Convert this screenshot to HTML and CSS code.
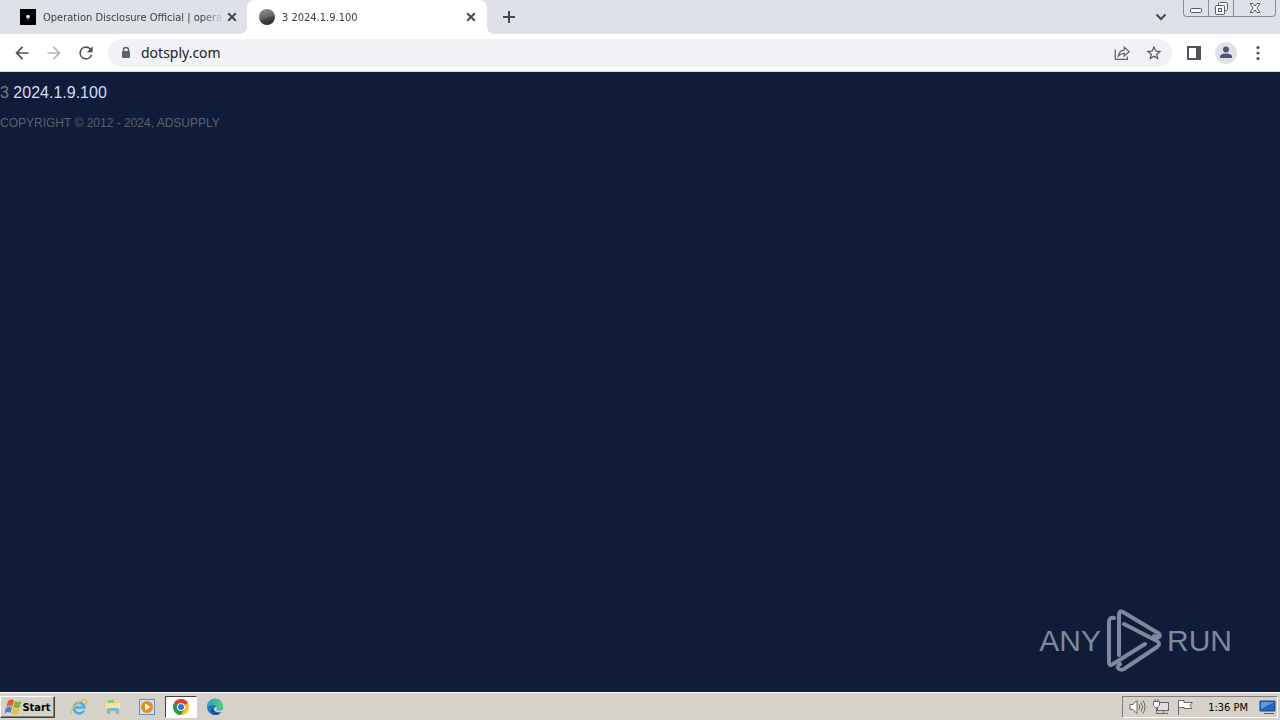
FILE: index.html
```html
<!DOCTYPE html>
<html lang="en">
<head>
    <meta charset="UTF-8">
    <meta name="viewport" content="width=device-width, initial-scale=1.0">
    <title>3 2024.1.9.100</title>
    <link rel="stylesheet" href="styles.css">
</head>
<body>
    <header class="tab-strip">
        <div class="tab">
            <svg class="favicon" viewBox="0 0 16 16">
                <rect width="16" height="16" fill="#000"/>
                <path d="M6 6h4v2q0 2-2 3q-2-1-2-3z" fill="#666"/>
                <circle cx="8" cy="7.500" r="1.500" fill="#eee"/>
            </svg>
            <span class="tab-title">Operation Disclosure Official | opera</span>
            <button class="tab-close" aria-label="Close tab">
                <svg viewBox="0 0 16 16"><path d="M4.200 4.200l7.600 7.600M11.800 4.200l-7.600 7.600"/></svg>
            </button>
        </div>
        <div class="tab active">
            <svg class="favicon" viewBox="0 0 16 16">
                <defs>
                    <linearGradient id="ball" x1="0.300" y1="0" x2="0.600" y2="1">
                        <stop offset="0" stop-color="#8a8a8a"/>
                        <stop offset="0.450" stop-color="#6c6c6c"/>
                        <stop offset="0.650" stop-color="#444"/>
                        <stop offset="1" stop-color="#2a2a2a"/>
                    </linearGradient>
                </defs>
                <circle cx="8" cy="8" r="8" fill="url(#ball)"/>
            </svg>
            <span class="tab-title">3 2024.1.9.100</span>
            <button class="tab-close" aria-label="Close tab">
                <svg viewBox="0 0 16 16"><path d="M4.200 4.200l7.600 7.600M11.800 4.200l-7.600 7.600"/></svg>
            </button>
        </div>
        <button class="new-tab" aria-label="New tab">
            <svg viewBox="0 0 16 16"><path d="M8 2v12M2 8h12"/></svg>
        </button>
        <button class="tab-search" aria-label="Search tabs">
            <svg viewBox="0 0 16 16"><path d="M3.500 5.500L8 10l4.500-4.500"/></svg>
        </button>
        <div class="window-buttons">
            <button class="minimize" aria-label="Minimize">
                <svg viewBox="0 0 16 16"><rect x="2.500" y="8.500" width="11" height="4" rx="1"/></svg>
            </button>
            <button class="restore" aria-label="Restore">
                <svg viewBox="0 0 16 16"><rect x="5.500" y="2.500" width="9" height="8" rx="1"/><rect x="2.500" y="5.500" width="9" height="9" rx="1"/><rect x="5.500" y="8.500" width="3" height="3"/></svg>
            </button>
            <button class="close" aria-label="Close">
                <svg viewBox="0 0 16 16"><path d="M3 3.500h3l2 2.500 2-2.500h3L10 8l3 4.500h-3l-2-2.500-2 2.500H3L6 8z"/></svg>
            </button>
        </div>
    </header>

    <nav class="toolbar">
        <button class="tool" aria-label="Back">
            <svg viewBox="0 0 24 24"><path d="M20 11H7.830l5.590-5.590L12 4l-8 8 8 8 1.410-1.410L7.830 13H20z"/></svg>
        </button>
        <button class="tool disabled" aria-label="Forward">
            <svg viewBox="0 0 24 24"><path d="M12 4l-1.410 1.410L16.170 11H4v2h12.170l-5.580 5.590L12 20l8-8z"/></svg>
        </button>
        <button class="tool" aria-label="Reload">
            <svg viewBox="0 0 24 24"><path d="M17.650 6.350A7.950 7.950 0 0 0 12 4a8 8 0 1 0 7.730 10h-2.080A6 6 0 1 1 12 6c1.660 0 3.140.690 4.220 1.780L13 11h7V4z"/></svg>
        </button>
        <div class="address-bar">
            <svg class="lock" viewBox="0 0 12 14"><path d="M3.500 6V4a2.500 2.500 0 0 1 5 0v2" fill="none" stroke="#5f6368" stroke-width="1.500"/><rect x="2" y="5" width="8" height="7" rx="1" fill="#5f6368"/></svg>
            <input type="text" class="address" value="dotsply.com" aria-label="Address">
            <button class="tool" aria-label="Share">
                <svg class="line" viewBox="0 0 20 20"><path d="M2.500 6v11H16v-3"/><path d="M12.500 3.500l5.500 5-5.500 5v-3q-4 0-6.500 3Q6.500 7.500 12.500 6.500z"/></svg>
            </button>
            <button class="tool" aria-label="Bookmark this tab">
                <svg viewBox="0 0 24 24"><path d="M22 9.240l-7.190-.620L12 2 9.190 8.630 2 9.240l5.460 4.730L5.820 21 12 17.270 18.180 21l-1.630-7.030zM12 15.400l-3.760 2.270 1-4.280-3.320-2.880 4.380-.380L12 6.100l1.710 4.040 4.380.380-3.320 2.880 1 4.280z"/></svg>
            </button>
        </div>
        <button class="tool" aria-label="Side panel">
            <svg viewBox="0 0 20 20"><path d="M3 3h14v14H3zM5 5v10h7V5z" fill-rule="evenodd"/></svg>
        </button>
        <button class="tool profile" aria-label="Profile">
            <svg viewBox="0 0 22 22"><circle cx="11" cy="7.500" r="3"/><path d="M5 16v-1.500c0-4 12-4 12 0V16z"/></svg>
        </button>
        <button class="tool" aria-label="Menu">
            <svg viewBox="0 0 20 20"><circle cx="10" cy="4.500" r="1.600"/><circle cx="10" cy="10" r="1.600"/><circle cx="10" cy="15.500" r="1.600"/></svg>
        </button>
    </nav>

    <main class="page">
        <p class="version"><span class="count">3</span> 2024.1.9.100</p>
        <p class="copyright">COPYRIGHT © 2012 - 2024, ADSUPPLY</p>
        <div class="watermark">
            <span>ANY</span>
            <svg viewBox="0 0 56 64">
                <path d="M8 9Q3 8 3 13V53Q3 58 7 55L39 35"/>
                <path d="M13 46V6Q13 1 17 3L52 24Q55 26 53 28Q51 29 48 27"/>
                <path d="M18 15L51 32Q55 35 51 38L18 60Q14 62 12 59Q11 57 14 55"/>
            </svg>
            <span>RUN</span>
        </div>
    </main>

    <footer class="taskbar">
        <button class="start">
            <svg viewBox="0 0 18 18">
                <path d="M4 3q3-2.500 6-.500L8.300 8.500q-3-2-6 .500z" fill="#e65b25"/>
                <path d="M11 3q3 2 6.500 0L15.800 9q-3 2-6.500 0z" fill="#7ab83a"/>
                <path d="M2 10q3-2.500 6-.500L6.500 15q-3-2-6 .500z" fill="#3b86d6"/>
                <path d="M9 10q3 2 6.500 0L13.800 15.500q-3 2-6.500 0z" fill="#f7bd28"/>
            </svg>
            Start
        </button>
        <button class="task" aria-label="Internet Explorer">
            <svg viewBox="0 0 18 18">
                <path d="M14 12.500A5.300 5.300 0 1 1 14.500 9.500H5" fill="none" stroke="#45aee8" stroke-width="2.600"/>
                <path d="M2 16Q-.500 13 6 7T16 2q2 1-.500 4.500" fill="none" stroke="#e6bd4a" stroke-width="1.500"/>
            </svg>
        </button>
        <button class="task" aria-label="Windows Explorer">
            <svg viewBox="0 0 18 18">
                <path d="M2 3h5l1 1h8v11H2z" fill="#e9cf7c"/>
                <path d="M4 2h6v3H4z" fill="#8ccb76"/>
                <path d="M2 5h14v6H2z" fill="#f5e4a2"/>
                <path d="M3 16v-4q0-2 2-2h8q2 0 2 2v4h-3v-3H6v3z" fill="#71b9df"/>
            </svg>
        </button>
        <button class="task" aria-label="Media Player">
            <svg viewBox="0 0 18 18">
                <rect x="1.500" y="1.500" width="15" height="15" fill="#c7e2f5" stroke="#5a93c5"/>
                <circle cx="9" cy="9" r="6" fill="#f18919"/>
                <path d="M7 5.500l5.500 3.500L7 12.500z" fill="#fff"/>
            </svg>
        </button>
        <button class="task pressed" aria-label="Google Chrome">
            <svg viewBox="0 0 18 18">
                <circle cx="9" cy="9" r="8" fill="#fbc116"/>
                <path d="M9 9L2.070 5A8 8 0 0 1 15.930 5z" fill="#e33b2e"/>
                <path d="M9 9L2.070 5A8 8 0 0 0 9 17l3.500-6z" fill="#279847"/>
                <circle cx="9" cy="9" r="4" fill="#fff"/>
                <circle cx="9" cy="9" r="3" fill="#2f74e0"/>
            </svg>
        </button>
        <button class="task" aria-label="Microsoft Edge">
            <svg viewBox="0 0 18 18">
                <defs>
                    <linearGradient id="edge" x1="0" y1="0" x2="1" y2="0.300">
                        <stop offset="0" stop-color="#239ae0"/>
                        <stop offset="1" stop-color="#4fd16a"/>
                    </linearGradient>
                </defs>
                <circle cx="9" cy="9" r="8" fill="#1679c8"/>
                <path d="M1 9a8 8 0 0 1 16-1q0 4-4 4-3 0-2.500-2 0-3-3.500-3Q3 7 1 10z" fill="url(#edge)"/>
                <path d="M7 9q-1 5 5 6 2 0 4-1.500-3 4-7.500 3.500Q3 14 7 9z" fill="#174d95"/>
                <path d="M10.500 8.500q1 1-.200 2.500Q11 13 14 12.500L18 11v2l-4 1.500Q7 14 8 10z" fill="#d6d2ca"/>
            </svg>
        </button>
        <div class="tray">
            <svg class="tray-icon" viewBox="0 0 18 18"><path d="M2 6.500h3L9 2.500v13L5 11.500H2z" fill="#fff"/><path d="M11 6.500q1.500 2.500 0 5M13 4.500q3 4.500 0 9M15 2.500q4 6.500 0 13"/></svg>
            <svg class="tray-icon" viewBox="0 0 18 18"><rect x="5.500" y="4.500" width="11" height="8" fill="#ddd"/><path d="M7 15.500h9M11.500 13v2M4.500 9v6.500H8"/><path d="M1.500 3.500h6v4l-2 2h-2l-2-2zM3 1v2M6 1v2" fill="#fff"/></svg>
            <svg class="tray-icon" viewBox="0 0 18 18"><path d="M2.500 2v15"/><path d="M2.500 2.500H8v2h8.500L14 7.500l2 3H8v-1H2.500z" fill="#fff"/></svg>
            <time class="clock">1:36 PM</time>
            <svg class="tray-icon" viewBox="0 0 18 18"><path d="M2 3h15v10H2z" fill="#2364bd" stroke="#17478c"/><path d="M3 4h13L3 11z" fill="#5b9be4" stroke="none"/><path d="M6 15.500h10" stroke="#30639e"/></svg>
        </div>
    </footer>
</body>
</html>
```
FILE: styles.css
```css
* {
    box-sizing: border-box;
}
body {
    display: flex;
    flex-direction: column;
    min-height: 100vh;
    margin: 0;
    font-family: "DejaVu Sans Condensed", "Noto Sans", sans-serif;
    font-size: 11px;
    color: #3c4043;
}
button {
    display: flex;
    align-items: center;
    justify-content: center;
    padding: 0;
    border: none;
    background: none;
    font: inherit;
}
svg {
    display: block;
    flex: none;
}

/* tabs */
.tab-strip {
    display: flex;
    height: 34px;
    padding-left: 8px;
    background-color: #dee1e8;
}
.tab {
    position: relative;
    display: flex;
    align-items: center;
    width: 240px;
    height: 34px;
    padding: 0 8px 0 12px;
}
.tab.active {
    margin-left: -1px;
    background-color: #fff;
    border-radius: 8px 8px 0 0;
}
.tab.active::before,
.tab.active::after {
    content: "";
    position: absolute;
    bottom: 0;
    width: 8px;
    height: 8px;
}
.tab.active::before {
    right: 100%;
    background: radial-gradient(circle at 0 0, transparent 8px, #fff 8px);
}
.tab.active::after {
    left: 100%;
    background: radial-gradient(circle at 100% 0, transparent 8px, #fff 8px);
}
.favicon {
    width: 16px;
    height: 16px;
    margin-right: 7px;
}
.tab-title {
    flex: 1;
    white-space: nowrap;
    mask-image: linear-gradient(to right, #000 88%, transparent);
}
.tab-close svg,
.new-tab svg,
.tab-search svg {
    width: 16px;
    height: 16px;
    fill: none;
    stroke: #45484d;
    stroke-width: 2;
}
.new-tab {
    width: 28px;
    margin-left: 8px;
}
.tab-search {
    width: 28px;
    margin-left: auto;
}
.window-buttons {
    display: flex;
    height: 17px;
    margin: 0 4px 0 8px;
    border: 1px solid #888c94;
    border-top: none;
    border-radius: 0 0 4px 4px;
}
.window-buttons button {
    width: 25px;
    border-right: 1px solid #888c94;
}
.window-buttons .close {
    width: 41px;
    border-right: none;
}
.window-buttons svg {
    width: 16px;
    height: 16px;
    fill: #f5f6f8;
    stroke: #555a63;
}

/* toolbar */
.toolbar {
    display: flex;
    align-items: center;
    gap: 12px;
    height: 38px;
    padding: 0 12px;
    background-color: #fff;
    border-bottom: 1px solid #d5d8de;
}
.tool {
    width: 20px;
    height: 20px;
}
.tool svg {
    width: 20px;
    height: 20px;
    fill: #50545a;
}
.tool.disabled svg {
    fill: #b4b6b9;
}
.address-bar {
    flex: 1;
    display: flex;
    align-items: center;
    gap: 12px;
    height: 28px;
    padding: 0 8px 0 12px;
    border-radius: 14px;
    background-color: #f0f2f5;
}
.address-bar .tool svg {
    width: 18px;
    height: 18px;
}
.address-bar .line {
    fill: none;
    stroke: #5f6368;
    stroke-width: 1.4;
}
.lock {
    width: 12px;
    height: 14px;
}
.address {
    flex: 1;
    padding: 0;
    margin-left: -3px;
    border: none;
    outline: none;
    background: none;
    font-family: "Noto Sans", sans-serif;
    font-size: 14px;
    color: #202124;
}
.profile svg {
    width: 22px;
    height: 22px;
    border-radius: 50%;
    background-color: #dde1e8;
    fill: #4c5672;
}

/* page */
.page {
    position: relative;
    flex: 1;
    padding-top: 11px;
    background-color: #0f1c3a;
    font-family: "Liberation Sans", Arial, sans-serif;
}
.page p {
    margin: 0;
}
.version {
    font-size: 16px;
    line-height: 20px;
    color: #d4dcff;
}
.count {
    color: #77777a;
}
.copyright {
    padding-top: 12px;
    font-size: 12px;
    line-height: 16px;
    color: #5c626c;
}
.watermark {
    position: absolute;
    right: 48px;
    bottom: 19px;
    display: flex;
    align-items: center;
    gap: 5px;
    font-size: 30px;
    line-height: 64px;
    color: #7f899c;
}
.watermark svg {
    width: 56px;
    height: 64px;
    fill: none;
    stroke: #7f899c;
    stroke-width: 4;
    stroke-linecap: round;
}

/* taskbar */
.taskbar {
    display: flex;
    align-items: center;
    height: 28px;
    padding: 1px 2px 0 0;
    background-color: #d6d2ca;
    border-top: 1px solid #fff;
    color: #000;
}
.start {
    width: 55px;
    height: 22px;
    margin-right: 8px;
    border: 1px solid;
    border-color: #fff #404040 #404040 #fff;
    box-shadow: inset -1px -1px #808080;
    font-weight: bold;
}
.start svg {
    width: 18px;
    height: 18px;
}
.task {
    width: 32px;
    height: 22px;
    margin-right: 2px;
}
.task svg {
    width: 18px;
    height: 18px;
}
.task.pressed {
    background-color: #fff;
    border: 1px solid;
    border-color: #404040 #fff #fff #404040;
}
.tray {
    display: flex;
    align-items: center;
    gap: 6px;
    height: 22px;
    margin-left: auto;
    padding: 0 1px 0 5px;
    border: 1px solid;
    border-color: #808080 #fff #fff #808080;
}
.tray-icon {
    width: 18px;
    height: 18px;
    fill: none;
    stroke: #666;
}
.clock {
    padding: 0 4px 0 8px;
}
```
